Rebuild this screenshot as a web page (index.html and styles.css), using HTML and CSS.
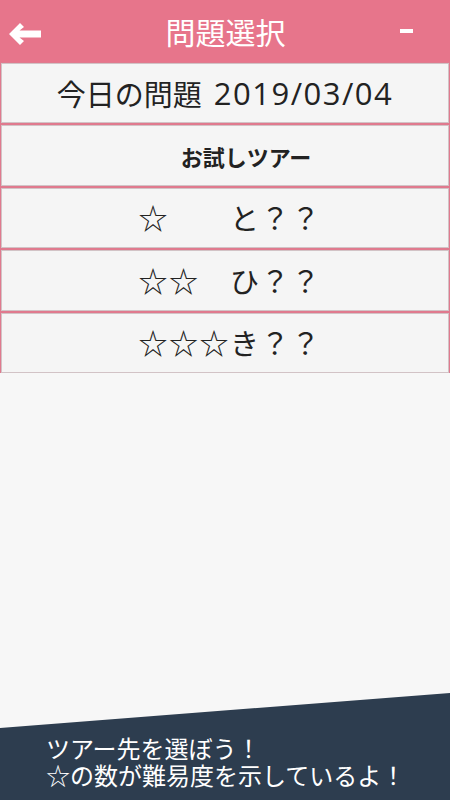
FILE: index.html
```html
<!doctype html>
<html lang="ja">
    <head>
        <meta charset="utf-8">
        <title>問題選択</title>
        <meta name="viewport" content="width=device-width, initial-scale=1">
        <link rel="stylesheet" href="styles.css">
    </head>
    <body>
        <header class="topbar">
            <svg class="back" viewBox="0 0 32 22" width="32" height="22">
                <path d="M0 11 L11 0 L15 4 L10.5 7.5 L32 7.5 L32 14.5 L10.5 14.5 L15 18 L11 22 Z" fill="#fff"/>
            </svg>
            <h1 class="title">問題選択</h1>
            <span class="minus"></span>
        </header>

        <ul class="menu">
            <li class="item"><span>今日の問題</span><span class="date">2019/03/04</span></li>
            <li class="item trial">お試しツアー</li>
            <li class="item stars">☆　　と？？</li>
            <li class="item stars">☆☆　ひ？？</li>
            <li class="item stars">☆☆☆き？？</li>
        </ul>

        <footer class="hint">
            <div class="line">ツアー先を選ぼう！</div>
            <div class="line">☆の数が難易度を示しているよ！</div>
        </footer>
    </body>
</html>
```

FILE: styles.css
```css
html, body {
	margin: 0;
	height: 100%;
}
body {
	background: #f7f7f7;
	font-family: "Noto Sans CJK JP", "Noto Sans", sans-serif;
	color: #222;
	position: relative;
	overflow: hidden;
}

.topbar {
	height: 62px;
	background: #e7758b;
	display: flex;
	align-items: center;
	justify-content: space-between;
	padding: 0 37px 0 9px;
	box-sizing: border-box;
}
.back {
	display: block;
	margin-top: 6px;
}
.title {
	margin: 0;
	color: #fff;
	font-size: 30px;
	font-weight: normal;
	line-height: 1;
	position: relative;
	left: 5px;
}
.minus {
	width: 13px;
	height: 4px;
	background: #fff;
}

.menu {
	list-style: none;
	margin: 0;
	padding: 1px 0 0;
	background: #e07a8e;
}
.item {
	height: 58.4px;
	margin: 0 1px 2px;
	border: 1px solid #d2c3c6;
	background: #f5f5f5;
	display: flex;
	align-items: center;
	justify-content: center;
	font-size: 29px;
	line-height: 1;
}
.date {
	font-family: "Open Sans", "Noto Sans", sans-serif;
	font-size: 31px;
	letter-spacing: 1.5px;
	margin-left: 12px;
}
.item.trial {
	font-size: 22px;
	font-weight: bold;
	padding-left: 42px;
}
.item.stars {
	letter-spacing: 1.5px;
	padding-left: 10px;
}

.hint {
	position: absolute;
	left: 0;
	right: 0;
	bottom: 0;
	height: 107px;
	box-sizing: border-box;
	padding: 41px 0 0 46px;
	background: #2d3d4f;
	clip-path: polygon(0 35px, 100% 0, 100% 100%, 0 100%);
	color: #fff;
	font-size: 24px;
}
.line {
	height: 27px;
	line-height: 27px;
}
```
